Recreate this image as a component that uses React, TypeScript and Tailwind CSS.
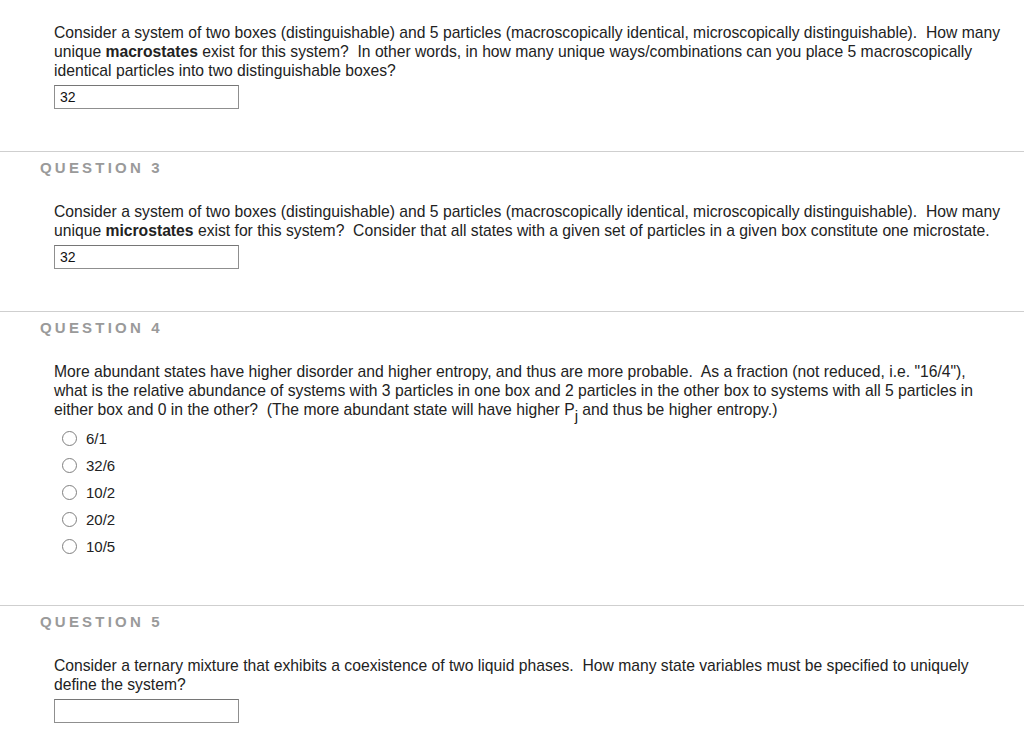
import React from "react"

function Header({ n }: { n: number }) {
  return (
    <div className="pl-[40px] pt-[8px] text-[15px] leading-[16px] font-bold tracking-[3.2px] text-[#9a9a9a]">
      QUESTION {n}
    </div>
  )
}

function TextBox({ value }: { value?: string }) {
  return (
    <div className="mt-[5px] w-[185px] h-[24px] border border-[#8f8f8f] border-t-[#767676] px-[5px] text-[14px] leading-[22px] text-[#111]">
      {value}
    </div>
  )
}

function Radio({ label }: { label: string }) {
  return (
    <div className="flex items-center h-[27px] pl-[8px]">
      <span className="w-[15px] h-[15px] rounded-full border border-[#808080] bg-white" />
      <span className="ml-[9px] text-[15px]">{label}</span>
    </div>
  )
}

export default function App() {
  return (
    <div
      className="w-[1024px] min-h-[741px] bg-white text-[#222] text-[15.7px] leading-[19px]"
      style={{ fontFamily: '"Liberation Sans", Arial, sans-serif' }}
    >
      {/* Question 2 body */}
      <div className="pl-[54px] pt-[23px] pb-[42px]">
        <p>
          Consider a system of two boxes (distinguishable) and 5 particles (macroscopically identical, microscopically distinguishable).&nbsp; How many
          <br />
          unique <b>macrostates</b> exist for this system?&nbsp; In other words, in how many unique ways/combinations can you place 5 macroscopically
          <br />
          identical particles into two distinguishable boxes?
        </p>
        <TextBox value="32" />
      </div>

      {/* Question 3 */}
      <div className="border-t border-[#cfcfcf]">
        <Header n={3} />
        <div className="pl-[54px] pt-[26px] pb-[42px]">
          <p>
            Consider a system of two boxes (distinguishable) and 5 particles (macroscopically identical, microscopically distinguishable).&nbsp; How many
            <br />
            unique <b>microstates</b> exist for this system?&nbsp; Consider that all states with a given set of particles in a given box constitute one microstate.
          </p>
          <TextBox value="32" />
        </div>
      </div>

      {/* Question 4 */}
      <div className="border-t border-[#cfcfcf]">
        <Header n={4} />
        <div className="pl-[54px] pt-[26px] pb-[45px]">
          <p>
            More abundant states have higher disorder and higher entropy, and thus are more probable.&nbsp; As a fraction (not reduced, i.e. "16/4"),
            <br />
            what is the relative abundance of systems with 3 particles in one box and 2 particles in the other box to systems with all 5 particles in
            <br />
            either box and 0 in the other?&nbsp; (The more abundant state will have higher P<sub className="text-[15px] leading-none align-[-2px]">j</sub> and thus be higher entropy.)
          </p>
          <div className="mt-[6px]">
            {["6/1", "32/6", "10/2", "20/2", "10/5"].map((o) => (
              <Radio key={o} label={o} />
            ))}
          </div>
        </div>
      </div>

      {/* Question 5 */}
      <div className="border-t border-[#cfcfcf]">
        <Header n={5} />
        <div className="pl-[54px] pt-[26px] pb-[16px]">
          <p>
            Consider a ternary mixture that exhibits a coexistence of two liquid phases.&nbsp; How many state variables must be specified to uniquely
            <br />
            define the system?
          </p>
          <TextBox />
        </div>
      </div>
    </div>
  )
}
